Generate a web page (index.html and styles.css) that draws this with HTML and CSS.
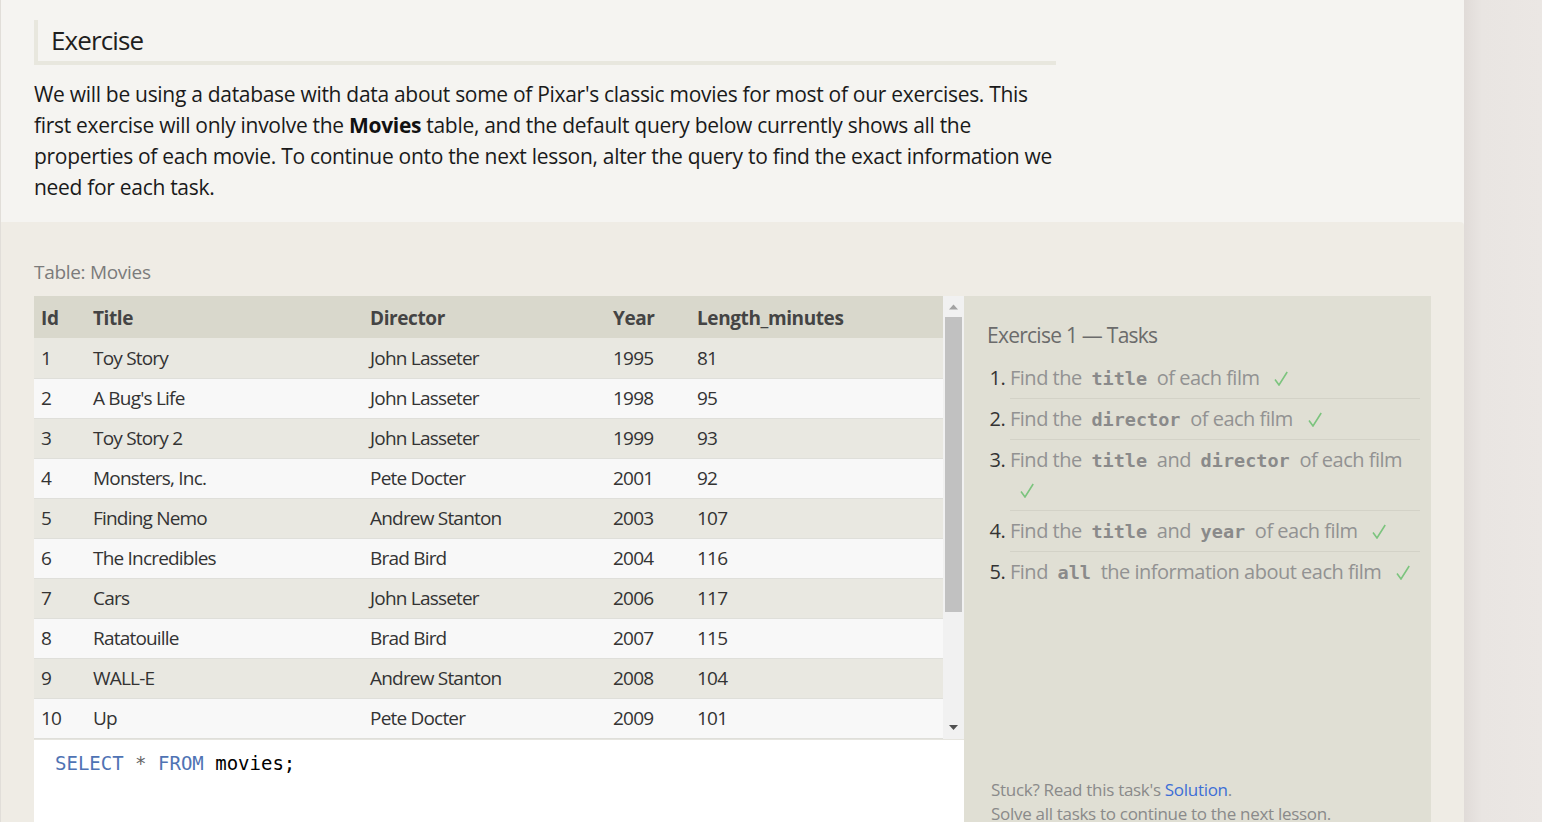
FILE: index.html
```html
<!DOCTYPE html>
<html lang="en">
<head>
<meta charset="utf-8">
<title>SQL Lesson — Exercise</title>
<link rel="stylesheet" href="styles.css">
</head>
<body>
<div class="page">
  <main class="lesson">
    <section class="intro">
      <h2 class="exercise-title">Exercise</h2>
      <p class="intro-text">We will be using a database with data about some of Pixar's classic movies for most of our exercises. This first exercise will only involve the <strong>Movies</strong> table, and the default query below currently shows all the properties of each movie. To continue onto the next lesson, alter the query to find the exact information we need for each task.</p>
    </section>
    <section class="workspace">
      <div class="table-label">Table: Movies</div>
      <div class="work-row">
        <div class="data-col">
          <div class="table-frame">
            <div class="table-clip">
              <table class="data-table">
                <colgroup>
                  <col class="c-id"><col class="c-title"><col class="c-director"><col class="c-year"><col class="c-length">
                </colgroup>
                <thead>
                  <tr><th>Id</th><th>Title</th><th>Director</th><th>Year</th><th>Length_minutes</th></tr>
                </thead>
                <tbody>
                  <tr><td>1</td><td>Toy Story</td><td>John Lasseter</td><td>1995</td><td>81</td></tr>
                  <tr><td>2</td><td>A Bug's Life</td><td>John Lasseter</td><td>1998</td><td>95</td></tr>
                  <tr><td>3</td><td>Toy Story 2</td><td>John Lasseter</td><td>1999</td><td>93</td></tr>
                  <tr><td>4</td><td>Monsters, Inc.</td><td>Pete Docter</td><td>2001</td><td>92</td></tr>
                  <tr><td>5</td><td>Finding Nemo</td><td>Andrew Stanton</td><td>2003</td><td>107</td></tr>
                  <tr><td>6</td><td>The Incredibles</td><td>Brad Bird</td><td>2004</td><td>116</td></tr>
                  <tr><td>7</td><td>Cars</td><td>John Lasseter</td><td>2006</td><td>117</td></tr>
                  <tr><td>8</td><td>Ratatouille</td><td>Brad Bird</td><td>2007</td><td>115</td></tr>
                  <tr><td>9</td><td>WALL-E</td><td>Andrew Stanton</td><td>2008</td><td>104</td></tr>
                  <tr><td>10</td><td>Up</td><td>Pete Docter</td><td>2009</td><td>101</td></tr>
                  <tr><td>11</td><td>Toy Story 3</td><td>Lee Unkrich</td><td>2010</td><td>103</td></tr>
                  <tr><td>12</td><td>Cars 2</td><td>John Lasseter</td><td>2011</td><td>120</td></tr>
                  <tr><td>13</td><td>Brave</td><td>Brenda Chapman</td><td>2012</td><td>102</td></tr>
                  <tr><td>14</td><td>Monsters University</td><td>Dan Scanlon</td><td>2013</td><td>110</td></tr>
                </tbody>
              </table>
            </div>
            <div class="scrollbar" aria-hidden="true">
              <span class="sb-btn">
                <svg width="21" height="21" viewBox="0 0 21 21"><polygon points="6,13.5 10.5,8.5 15,13.5" fill="#a3a3a3"/></svg>
              </span>
              <span class="sb-thumb"></span>
              <span class="sb-track"></span>
              <span class="sb-btn">
                <svg width="21" height="21" viewBox="0 0 21 21"><polygon points="6,7 15,7 10.5,12" fill="#505050"/></svg>
              </span>
            </div>
          </div>
          <div class="editor"><code><span class="kw">SELECT</span> <span class="op">*</span> <span class="kw">FROM</span> movies;</code></div>
        </div>
        <aside class="tasks">
          <h3 class="tasks-title">Exercise 1 — Tasks</h3>
          <ol class="task-list">
            <li>Find the <code>title</code> of each film <svg class="check" width="14" height="15" viewBox="0 0 14 15"><path d="M1 8.5 L5 14 L13.2 1" fill="none" stroke="#7cc47e" stroke-width="1.6"/></svg></li>
            <li>Find the <code>director</code> of each film <svg class="check" width="14" height="15" viewBox="0 0 14 15"><path d="M1 8.5 L5 14 L13.2 1" fill="none" stroke="#7cc47e" stroke-width="1.6"/></svg></li>
            <li>Find the <code>title</code> and <code>director</code> of each film <svg class="check" width="14" height="15" viewBox="0 0 14 15"><path d="M1 8.5 L5 14 L13.2 1" fill="none" stroke="#7cc47e" stroke-width="1.6"/></svg></li>
            <li>Find the <code>title</code> and <code>year</code> of each film <svg class="check" width="14" height="15" viewBox="0 0 14 15"><path d="M1 8.5 L5 14 L13.2 1" fill="none" stroke="#7cc47e" stroke-width="1.6"/></svg></li>
            <li>Find <code>all</code> the information about each film <svg class="check" width="14" height="15" viewBox="0 0 14 15"><path d="M1 8.5 L5 14 L13.2 1" fill="none" stroke="#7cc47e" stroke-width="1.6"/></svg></li>
          </ol>
          <div class="stuck">
            <p>Stuck? Read this task's <a href="#">Solution</a>.</p>
            <p>Solve all tasks to continue to the next lesson.</p>
          </div>
        </aside>
      </div>
    </section>
  </main>
  <div class="sidebar"></div>
</div>
</body>
</html>
```
FILE: styles.css
```css
* { box-sizing: border-box; }

html, body {
  margin: 0;
  padding: 0;
  height: 100%;
  overflow: hidden;
}

body {
  font-family: "Open Sans", "Noto Sans", sans-serif;
  color: #1a1a1a;
  background: #ebe7e4;
}

.page {
  display: flex;
  min-height: 100vh;
}

.lesson {
  width: 1464px;
  flex: none;
  border-left: 1px solid #e1ded9;
  background: #f5f4f1;
}

.sidebar {
  flex: 1;
  background: linear-gradient(to right, #e0dbd8, #e9e5e2 18px, #ebe7e4);
}

/* intro */
.intro {
  padding: 20px 33px 19px;
}

.exercise-title {
  width: 1022px;
  margin: 0;
  padding: 0 13px 1px;
  font-size: 26px;
  font-weight: 400;
  line-height: 40px;
  color: #1e1e1e;
  border-left: 4px solid #e8e7de;
  border-bottom: 4px solid #e8e7de;
  letter-spacing: -0.9px;
}

.intro-text {
  width: 1030px;
  margin: 14px 0 0;
  font-size: 21px;
  line-height: 31px;
  letter-spacing: -0.3px;
}

.intro-text strong { font-weight: 700; color: #111; }

/* workspace */
.workspace {
  background: #efece5;
  border-top-right-radius: 4px;
  padding: 37px 32px 0 33px;
}

.table-label {
  font-size: 19px;
  line-height: 26px;
  color: #7b7b7b;
  margin-bottom: 11px;
  letter-spacing: -0.3px;
}

.work-row {
  display: flex;
  align-items: stretch;
}

.data-col {
  width: 930px;
  flex: none;
  display: flex;
  flex-direction: column;
}

.table-frame {
  height: 443px;
  display: flex;
}

.table-clip {
  flex: 1;
  overflow: hidden;
  background: #e9e8e1;
}

.scrollbar {
  width: 21px;
  flex: none;
  display: flex;
  flex-direction: column;
  background: #f1f1f1;
}

.sb-btn {
  height: 21px;
  flex: none;
  display: block;
}

.sb-btn svg { display: block; }

.sb-thumb {
  height: 295px;
  flex: none;
  margin: 0 2px;
  background: #c1c1c1;
}

.sb-track { flex: 1; }

.data-table {
  width: 909px;
  table-layout: fixed;
  border-collapse: collapse;
  font-size: 19px;
  color: #333;
}

.c-id { width: 52px; }
.c-title { width: 277px; }
.c-director { width: 243px; }
.c-year { width: 84px; }
.c-length { width: 253px; }

.data-table th {
  height: 42px;
  padding: 1px 7px 0;
  text-align: left;
  font-weight: 700;
  color: #444;
  background: #d9d8cc;
  letter-spacing: -0.4px;
}

.data-table td {
  height: 40px;
  padding: 0 7px;
  border-bottom: 1px solid #dfdfda;
  white-space: nowrap;
  letter-spacing: -0.8px;
}

.data-table tbody tr:nth-child(odd) td { background: #e9e8e1; }
.data-table tbody tr:nth-child(even) td { background: #f8f8f8; }

.editor {
  flex: 1;
  min-height: 101px;
  background: #fff;
  border-top: 1px solid #e6e5df;
  padding: 11px 21px 10px;
  font-family: "DejaVu Sans Mono", "Liberation Mono", monospace;
  font-size: 19px;
  line-height: 24px;
  color: #000;
}

.editor .kw { color: #4f73b4; }
.editor .op { color: #666; }

/* tasks */
.tasks {
  width: 467px;
  flex: none;
  background: #e0dfd4;
  padding: 24px 11px 14px 23px;
  display: flex;
  flex-direction: column;
}

.tasks-title {
  margin: 0 0 8px;
  font-size: 21px;
  font-weight: 400;
  line-height: 30px;
  color: #6b6b6b;
  letter-spacing: -0.75px;
}

.task-list {
  margin: 0;
  padding: 0 0 0 23px;
  font-size: 20px;
  line-height: 30px;
  color: #929292;
  letter-spacing: -0.5px;
}

.task-list li {
  padding: 5px 0;
  border-bottom: 1px solid #d3d2c7;
}

.task-list li:last-child { border-bottom: none; }

.task-list li::marker { color: #333; }

.task-list code {
  font-family: "DejaVu Sans Mono", "Liberation Mono", monospace;
  font-weight: 700;
  font-size: 18.5px;
  line-height: 1;
  color: #8a8a8a;
  padding: 0 5px;
  letter-spacing: 0;
}

.check {
  margin-left: 10px;
  vertical-align: -1px;
}

.stuck {
  margin-top: auto;
  margin-left: 4px;
  font-size: 17px;
  line-height: 24px;
  color: #8a8a8a;
  letter-spacing: -0.3px;
}

.stuck p { margin: 0; }
.stuck a { color: #3d6ed6; text-decoration: none; }
```
